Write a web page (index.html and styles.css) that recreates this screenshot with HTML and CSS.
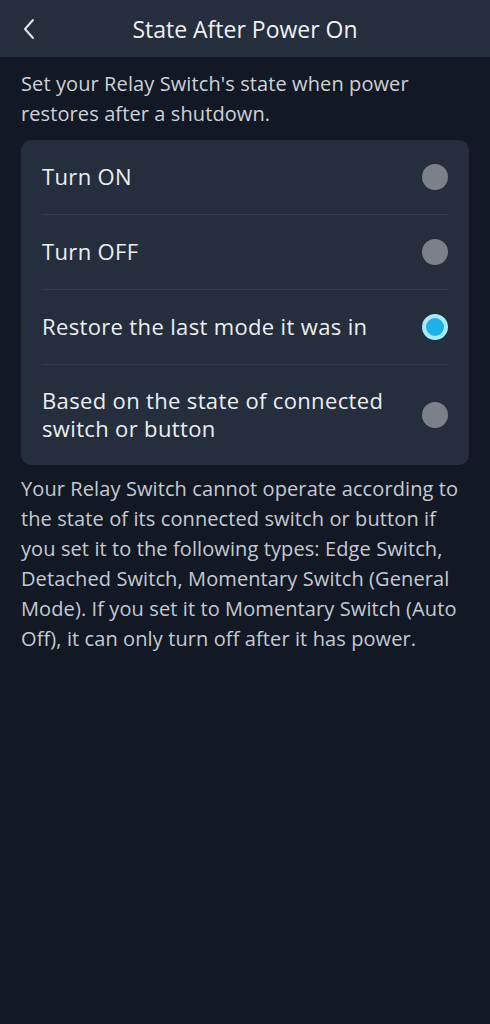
FILE: index.html
```html
<!DOCTYPE html>
<html lang="en">
<head>
<meta charset="utf-8">
<link rel="stylesheet" href="styles.css">
</head>
<body>
<header class="topbar">
  <button class="back" aria-label="Back">
    <svg width="14" height="22" viewBox="0 0 14 22"><path d="M11 2 L3 11 L11 20" fill="none" stroke="#e3e6eb" stroke-width="2" stroke-linecap="round" stroke-linejoin="round"/></svg>
  </button>
  <h1 class="title">State After Power On</h1>
</header>
<main class="content">
  <p class="intro">Set your Relay Switch's state when power restores after a shutdown.</p>
  <div class="card">
    <div class="row"><span class="label">Turn ON</span><span class="radio"></span></div>
    <div class="row"><span class="label">Turn OFF</span><span class="radio"></span></div>
    <div class="row"><span class="label">Restore the last mode it was in</span><span class="radio on"></span></div>
    <div class="row tall"><span class="label">Based on the state of connected switch or button</span><span class="radio"></span></div>
  </div>
  <p class="note">Your Relay Switch cannot operate according to the state of its connected switch or button if you set it to the following types: Edge Switch, Detached Switch, Momentary Switch (General Mode). If you set it to Momentary Switch (Auto Off), it can only turn off after it has power.</p>
</main>
</body>
</html>
```
FILE: styles.css
```css
* { box-sizing: border-box; }
html, body { margin: 0; padding: 0; }
body {
  background: #121924;
  min-height: 1024px;
  font-family: "Open Sans", "Noto Sans", sans-serif;
  color: #e6e9ee;
}
.topbar {
  height: 57px;
  background: #252e3c;
  display: flex;
  align-items: center;
}
.back {
  background: none;
  border: 0;
  padding: 0;
  margin-left: 22px;
  width: 16px;
  height: 24px;
  display: flex;
  align-items: center;
}
.title {
  margin: 0;
  flex: 1;
  text-align: center;
  font-size: 23px;
  font-weight: 400;
  color: #eef0f3;
  padding-right: 38px;
}
.content { padding: 0 21px; }
.intro {
  margin: 12px 0 0;
  font-size: 20px;
  line-height: 30px;
  color: #cdd1d8;
  letter-spacing: 0.1px;
}
.card {
  margin-top: 11px;
  background: #242e3d;
  border-radius: 10px;
  padding: 0 21px;
}
.row {
  display: flex;
  align-items: center;
  justify-content: space-between;
  height: 75px;
  border-bottom: 1px solid #323d4c;
}
.row:last-child { border-bottom: 0; }
.row.tall { height: 100px; }
.label {
  font-size: 22px;
  line-height: 28px;
  color: #eceef2;
  max-width: 360px;
  letter-spacing: 0.35px;
  padding-bottom: 2px;
}
.radio {
  width: 26px;
  height: 26px;
  border-radius: 50%;
  background: #7b8089;
  flex: none;
}
.radio.on {
  background: #1db2e6;
  border: 4px solid #a8e9fb;
}
.note {
  margin: 9px 0 0;
  font-size: 20px;
  line-height: 30px;
  color: #c5cad2;
  letter-spacing: 0.1px;
}
```
